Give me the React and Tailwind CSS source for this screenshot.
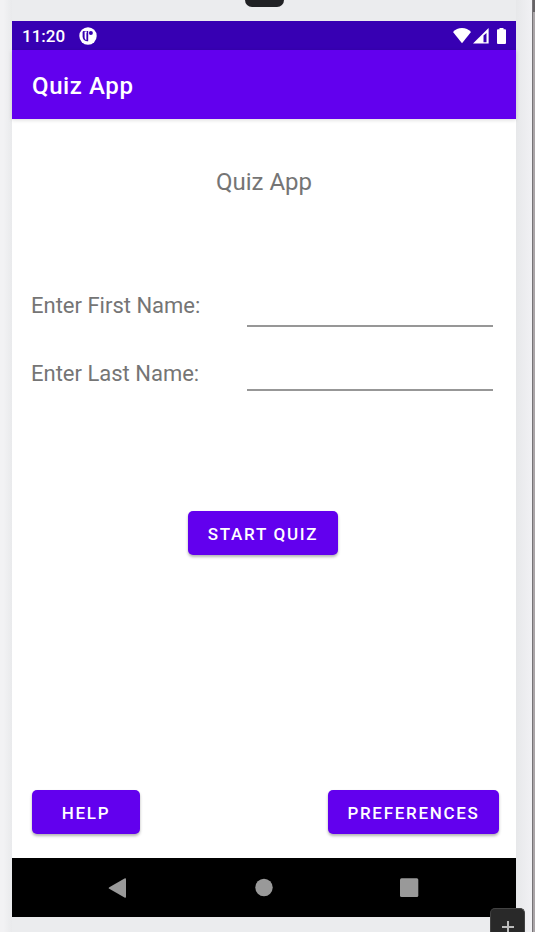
function StatusBar() {
  return (
    <div className="flex h-[29px] shrink-0 items-center bg-[#3700b3] px-2.5 text-white">
      <span className="text-[17px] leading-5 font-medium">11:20</span>
      <svg className="ml-3.5 h-[18px] w-[18px]" viewBox="0 0 18 18" aria-hidden="true">
        <circle cx="9" cy="9" r="8.700" fill="#fff" />
        <path d="M5 4h4.200v10.200H8C5.300 14.200 3.600 12.300 3.600 9.600V5.400Q3.600 4 5 4Z" fill="#3700b3" />
        <path d="M5.600 4.600H8v1H7.400v7.600c-1.200-.4-1.800-1.400-1.800-2.900Z" fill="#fff" />
        <circle cx="11.900" cy="5.900" r="2" fill="#3700b3" />
      </svg>
      <div className="ml-auto flex items-center">
        <svg className="h-4 w-[18px]" viewBox="0 0 18 16" fill="#fff" aria-hidden="true">
          <path d="M0 4C2.400 1.500 5.400 0 9 0s6.600 1.500 9 4L9 15.200Z" />
        </svg>
        <svg className="ml-0.5 h-4 w-4" viewBox="0 0 16 16" aria-hidden="true">
          <path d="M0 15.600 15.600 0v15.600Z" fill="#fff" />
          <path d="M10.500 7.500 13.500 5v9.200h-3Z" fill="#3700b3" />
        </svg>
        <svg className="ml-2 h-4 w-[9px]" viewBox="0 0 9 16" fill="#fff" aria-hidden="true">
          <path d="M2.500 0h4v1.200H8a1 1 0 0 1 1 1V15a1 1 0 0 1-1 1H1a1 1 0 0 1-1-1V2.200a1 1 0 0 1 1-1h1.500Z" />
        </svg>
      </div>
    </div>
  );
}

function AppButton({ className, children }) {
  return (
    <button
      type="button"
      className={`h-11 rounded-[5px] bg-[#6200ee] pt-0.5 text-center text-[17px] leading-6 font-medium tracking-widest text-white shadow-[0_2px_3px_rgba(0,0,0,0.3)] ${className}`}
    >
      {children}
    </button>
  );
}

function NavigationBar() {
  return (
    <nav className="flex h-[59px] shrink-0 items-center justify-between bg-black pr-[97px] pl-24 text-[#999999]">
      <button type="button" aria-label="Back">
        <svg className="h-5 w-5" viewBox="0 0 20 20" fill="currentColor" aria-hidden="true">
          <path d="M1.300 9.200 16.500.4q1.500-.8 1.500.8v17.600q0 1.600-1.500.8L1.300 10.800q-1.300-.8 0-1.600Z" />
        </svg>
      </button>
      <button type="button" aria-label="Home">
        <svg className="h-5 w-5" viewBox="0 0 20 20" fill="currentColor" aria-hidden="true">
          <circle cx="10" cy="9.500" r="8.700" />
        </svg>
      </button>
      <button type="button" aria-label="Recent apps">
        <svg className="h-5 w-5" viewBox="0 0 20 20" fill="currentColor" aria-hidden="true">
          <rect x="1" y=".3" width="18.300" height="18.700" rx="1.500" />
        </svg>
      </button>
    </nav>
  );
}

export default function App() {
  return (
    <div className="relative flex min-h-screen overflow-hidden bg-[#ebecee] font-[Roboto,sans-serif]">
      <div className="w-3 shrink-0 bg-linear-to-r from-[#f2f2f4] from-30% to-[#e9eaec]" />
      <div className="flex min-w-0 grow flex-col pt-[21px] pb-[15px]">
        <div className="flex grow flex-col bg-white">
          <StatusBar />
          <header className="z-10 flex h-[69px] shrink-0 items-center bg-[#6200ee] px-5 pt-0.5 shadow-[0_1px_4px_rgba(0,0,0,0.15)]">
            <h1 className="text-2xl font-medium tracking-wide text-white">Quiz App</h1>
          </header>
          <main className="flex grow flex-col pt-[47px] pb-6 text-[#757575]">
            <h2 className="text-center text-2xl">Quiz App</h2>
            <form className="mt-[89px] flex justify-between pr-[23px] pl-[19px]">
              <div className="flex flex-col gap-9 pt-[3px] text-[22px] leading-8">
                <label htmlFor="first-name">Enter First Name:</label>
                <label htmlFor="last-name">Enter Last Name:</label>
              </div>
              <div className="flex w-[246px] flex-col gap-6">
                <input id="first-name" type="text" className="h-10 w-full border-b-2 border-[#979797] bg-transparent text-xl outline-none" />
                <input id="last-name" type="text" className="h-10 w-full border-b-2 border-[#979797] bg-transparent text-xl outline-none" />
              </div>
            </form>
            <AppButton className="mt-[120px] mr-0.5 w-[150px] self-center">START QUIZ</AppButton>
            <div className="mt-auto flex justify-between pr-[17px] pl-5">
              <AppButton className="w-[108px]">HELP</AppButton>
              <AppButton className="w-[171px]">PREFERENCES</AppButton>
            </div>
          </main>
          <NavigationBar />
        </div>
      </div>
      <div className="w-4 shrink-0 bg-linear-to-r from-[#e7e8ea] to-[#f1f1f4]" />
      <div className="flex w-[3px] shrink-0 flex-col border-l border-[#777477] bg-[#aaa5a8]">
        <div className="h-3 bg-[#666366]" />
      </div>
      <div className="absolute top-0 left-[245px] h-[7px] w-[39px] rounded-b-lg bg-[#202124]" />
      <button
        type="button"
        aria-label="Zoom in"
        className="absolute right-2.5 bottom-0 flex h-6 w-[35px] justify-center rounded-t-[5px] border border-b-0 border-[#424242] bg-[#292929] pt-[11px] text-[#bcbcbc]"
      >
        <svg className="h-3.5 w-3.5 shrink-0" viewBox="0 0 14 14" stroke="currentColor" strokeWidth="2" aria-hidden="true">
          <path d="M7 1v12M1 7h12" />
        </svg>
      </button>
    </div>
  );
}
